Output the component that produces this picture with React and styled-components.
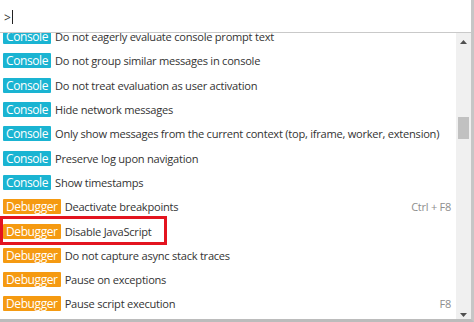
import React from "react";
import styled, { createGlobalStyle } from "styled-components";

const GlobalStyle = createGlobalStyle`
  html, body { margin: 0; padding: 0; background: #ffffff; }
  body { font-family: "Open Sans", "Noto Sans", sans-serif; }
`;

const Panel = styled.div`
  width: 474px;
  height: 322px;
  box-sizing: border-box;
  border-right: 3px solid #c6c6c6;
  border-bottom: 3px solid #bcbcbc;
  display: flex;
  flex-direction: column;
  background: #fff;
  overflow: hidden;
`;

const Prompt = styled.div`
  height: 33px;
  flex: none;
  border-bottom: 1px solid #c9c9c9;
  display: flex;
  align-items: center;
  padding-left: 4px;
  padding-top: 2px;
  box-sizing: border-box;
  font-size: 12px;
  color: #333;
`;

const Caret = styled.span`
  display: inline-block;
  width: 1px;
  height: 14px;
  background: #222;
  margin-left: 1px;
`;

const Body = styled.div`
  flex: 1;
  display: flex;
  min-height: 0;
`;

const List = styled.div`
  flex: 1;
  overflow: hidden;
  position: relative;
`;

const Inner = styled.div`
  margin-top: -8.5px;
`;

const Row = styled.div`
  height: 24.3px;
  display: flex;
  align-items: center;
  gap: 4px;
  padding: 0 5px 0 3px;
  position: relative;
  font-size: 11.1px;
  letter-spacing: -0.25px;
  white-space: nowrap;
  ${(p) =>
    p.$marked &&
    `
    &::after {
      content: "";
      position: absolute;
      left: 0;
      top: -3px;
      width: 167px;
      height: 29px;
      box-sizing: border-box;
      border: 3.5px solid #e3141f;
    }
  `}
`;

const Badge = styled.span`
  background: ${(p) => p.$color};
  color: #fff;
  height: 15px;
  line-height: 15px;
  padding: 0 3px;
  border-radius: 1px;
  font-size: 12px;
  letter-spacing: -0.4px;
`;

const Label = styled.span`
  color: #333;
`;

const Shortcut = styled.span`
  margin-left: auto;
  color: #8e8e8e;
  font-size: 11px;
`;

const Scrollbar = styled.div`
  width: 15px;
  flex: none;
  background: #f0f0f0;
  display: flex;
  flex-direction: column;
`;

const ArrowButton = styled.div`
  height: 17px;
  display: flex;
  justify-content: center;
  align-items: ${(p) => (p.$down ? "flex-end" : "center")};
  padding-bottom: ${(p) => (p.$down ? "2px" : "0")};
  box-sizing: border-box;
`;

const Track = styled.div`
  flex: 1;
  padding: 67px 2px 0 2px;
`;

const Thumb = styled.div`
  height: 22px;
  background: #c1c1c1;
`;

const Tri = ({ down }) => (
  <svg width="7" height="4" viewBox="0 0 7 4">
    <path d={down ? "M0 0H7L3.5 4Z" : "M0 4H7L3.5 0Z"} fill="#505050" />
  </svg>
);

const CONSOLE = "#1ab4d2";
const DEBUGGER = "#f59a11";

const items = [
  ["Console", "Do not eagerly evaluate console prompt text"],
  ["Console", "Do not group similar messages in console"],
  ["Console", "Do not treat evaluation as user activation"],
  ["Console", "Hide network messages"],
  ["Console", "Only show messages from the current context (top, iframe, worker, extension)"],
  ["Console", "Preserve log upon navigation"],
  ["Console", "Show timestamps"],
  ["Debugger", "Deactivate breakpoints", "Ctrl + F8"],
  ["Debugger", "Disable JavaScript", null, true],
  ["Debugger", "Do not capture async stack traces"],
  ["Debugger", "Pause on exceptions"],
  ["Debugger", "Pause script execution", "F8"],
];

export default function App() {
  return (
    <>
      <GlobalStyle />
      <Panel>
        <Prompt>
          &gt;<Caret />
        </Prompt>
        <Body>
          <List>
            <Inner>
              {items.map(([cat, text, key, marked], i) => (
                <Row key={i} $marked={marked}>
                  <Badge $color={cat === "Console" ? CONSOLE : DEBUGGER}>{cat}</Badge>
                  <Label>{text}</Label>
                  {key && <Shortcut>{key}</Shortcut>}
                </Row>
              ))}
            </Inner>
          </List>
          <Scrollbar>
            <ArrowButton>
              <Tri />
            </ArrowButton>
            <Track>
              <Thumb />
            </Track>
            <ArrowButton $down>
              <Tri down />
            </ArrowButton>
          </Scrollbar>
        </Body>
      </Panel>
    </>
  );
}
